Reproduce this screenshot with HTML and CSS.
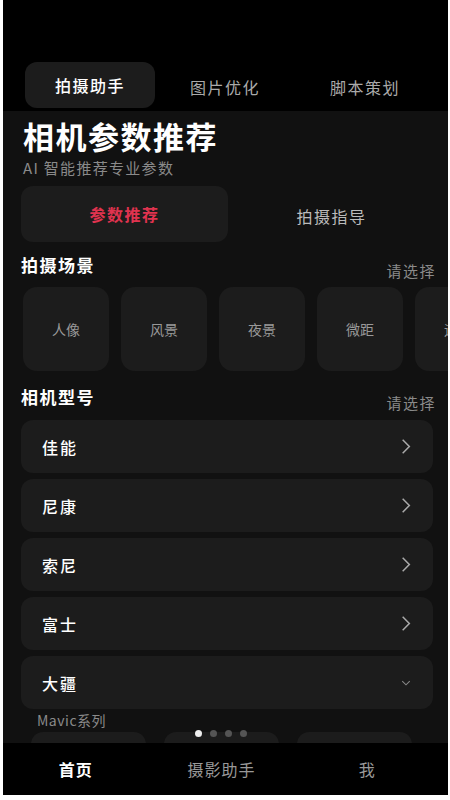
FILE: index.html
```html
<!DOCTYPE html>
<html lang="zh">
<head>
    <meta charset="UTF-8">
    <meta name="viewport" content="width=device-width, initial-scale=1.0">
    <title>相机参数推荐</title>
    <link rel="stylesheet" href="styles.css">
</head>
<body>
    <div class="app">
        <div class="top">
            <div class="top-tabs">
                <div class="top-tab active">拍摄助手</div>
                <div class="top-tab">图片优化</div>
                <div class="top-tab">脚本策划</div>
            </div>
        </div>
        <div class="content">
            <h1>相机参数推荐</h1>
            <p class="subtitle">AI 智能推荐专业参数</p>
            <div class="segment">
                <div class="seg active">参数推荐</div>
                <div class="seg">拍摄指导</div>
            </div>

            <div class="section-head">
                <span class="section-title">拍摄场景</span>
                <span class="hint">请选择</span>
            </div>
            <div class="scenes">
                <div class="scene">人像</div>
                <div class="scene">风景</div>
                <div class="scene">夜景</div>
                <div class="scene">微距</div>
                <div class="scene">运动</div>
            </div>

            <div class="section-head">
                <span class="section-title">相机型号</span>
                <span class="hint">请选择</span>
            </div>
            <div class="brands">
                <div class="brand">佳能<svg class="chev" viewBox="0 0 12 20"><path d="M2 2l8 8-8 8"/></svg></div>
                <div class="brand">尼康<svg class="chev" viewBox="0 0 12 20"><path d="M2 2l8 8-8 8"/></svg></div>
                <div class="brand">索尼<svg class="chev" viewBox="0 0 12 20"><path d="M2 2l8 8-8 8"/></svg></div>
                <div class="brand">富士<svg class="chev" viewBox="0 0 12 20"><path d="M2 2l8 8-8 8"/></svg></div>
                <div class="brand">大疆<svg class="chev-down" viewBox="0 0 12 8"><path d="M1 1.5l5 5 5-5"/></svg></div>
            </div>
            <div class="series">Mavic系列</div>
            <div class="series-row">
                <div class="series-card"></div>
                <div class="series-card"></div>
                <div class="series-card"></div>
            </div>
            <div class="dots">
                <span class="dot on"></span>
                <span class="dot"></span>
                <span class="dot"></span>
                <span class="dot"></span>
            </div>
        </div>
        <nav class="bottom-nav">
            <div class="nav-item active">首页</div>
            <div class="nav-item">摄影助手</div>
            <div class="nav-item">我</div>
        </nav>
    </div>
</body>
</html>
```

FILE: styles.css
```css
body {
    margin: 0;
    background-color: #fff;
    font-family: "Noto Sans CJK SC", "Noto Sans", sans-serif;
    color: #fff;
}
.app {
    width: 445px;
    height: 795px;
    margin-left: 3px;
    background-color: #111;
    display: flex;
    flex-direction: column;
    overflow: hidden;
}
.top {
    background-color: #000;
    padding: 62px 0 3px 22px;
}
.top-tabs {
    display: flex;
    align-items: center;
}
.top-tab {
    font-size: 16px;
    letter-spacing: 1.5px;
    color: #aaa;
    width: 140px;
    text-align: center;
    padding-top: 4px;
}
.top-tab.active {
    width: 130px;
    height: 46px;
    line-height: 46px;
    padding-top: 0;
    background-color: #1c1c1c;
    border-radius: 12px;
    color: #fff;
    font-weight: 500;
}
.content {
    flex: 1;
    padding: 7px 0 0 18px;
    position: relative;
    overflow: hidden;
}
h1 {
    margin: 0;
    font-size: 31px;
    font-weight: 700;
    letter-spacing: 1.5px;
    line-height: 36px;
    padding-left: 2px;
}
.subtitle {
    margin: 5px 0 0;
    padding-left: 2px;
    font-size: 15px;
    letter-spacing: 1.3px;
    color: #8a8a8a;
    line-height: 18px;
}
.segment {
    display: flex;
    align-items: center;
    margin-top: 7px;
}
.seg {
    width: 207px;
    height: 56px;
    line-height: 56px;
    text-align: center;
    font-size: 16px;
    letter-spacing: 1.5px;
    color: #bbb;
    border-radius: 12px;
}
.seg + .seg {
    padding-top: 4px;
}
.seg.active {
    background-color: #1c1c1c;
    color: #e0334f;
    font-weight: 700;
}
.section-head {
    display: flex;
    justify-content: space-between;
    align-items: flex-end;
    padding-right: 12px;
    margin-top: 8px;
}
.section-title {
    font-size: 17px;
    font-weight: 700;
    letter-spacing: 1.5px;
}
.hint {
    font-size: 15px;
    letter-spacing: 1.5px;
    color: #8a8a8a;
    margin-bottom: -4px;
}
.scenes {
    display: flex;
    gap: 12px;
    margin-top: 10px;
    padding-left: 2px;
}
.scene {
    flex: none;
    width: 86px;
    height: 84px;
    border-radius: 14px;
    background-color: #1c1c1c;
    display: flex;
    align-items: center;
    justify-content: center;
    font-size: 14px;
    color: #999;
}
.scenes + .section-head {
    margin-top: 13px;
}
.brands {
    display: flex;
    flex-direction: column;
    gap: 6px;
    margin-top: 11px;
    padding-right: 15px;
}
.brand {
    height: 53px;
    border-radius: 12px;
    background-color: #1c1c1c;
    display: flex;
    align-items: center;
    justify-content: space-between;
    padding: 0 22px 0 21px;
    font-size: 16px;
    font-weight: 500;
    letter-spacing: 2px;
}
.chev {
    width: 10px;
    height: 17px;
    fill: none;
    stroke: #aaa;
    stroke-width: 1.8;
}
.chev-down {
    width: 10px;
    height: 6px;
    fill: none;
    stroke: #888;
    stroke-width: 1.4;
}
.series {
    font-size: 14px;
    letter-spacing: 0.5px;
    color: #8a8a8a;
    line-height: 18px;
    margin: 2px 0 0 16px;
}
.series-row {
    display: flex;
    gap: 18px;
    margin-top: 3px;
    padding-left: 10px;
}
.series-card {
    width: 115px;
    height: 40px;
    border-radius: 12px;
    background-color: #1c1c1c;
}
.dots {
    position: absolute;
    left: 0;
    right: 10px;
    bottom: 6px;
    display: flex;
    justify-content: center;
    gap: 8px;
}
.dot {
    width: 7px;
    height: 7px;
    border-radius: 50%;
    background-color: #555;
}
.dot.on {
    background-color: #eee;
}
.bottom-nav {
    height: 52px;
    background-color: #000;
    display: flex;
    align-items: center;
    padding-right: 8px;
}
.nav-item {
    flex: 1;
    text-align: center;
    font-size: 16px;
    letter-spacing: 1px;
    color: #999;
}
.nav-item.active {
    color: #fff;
    font-weight: 700;
}
```
